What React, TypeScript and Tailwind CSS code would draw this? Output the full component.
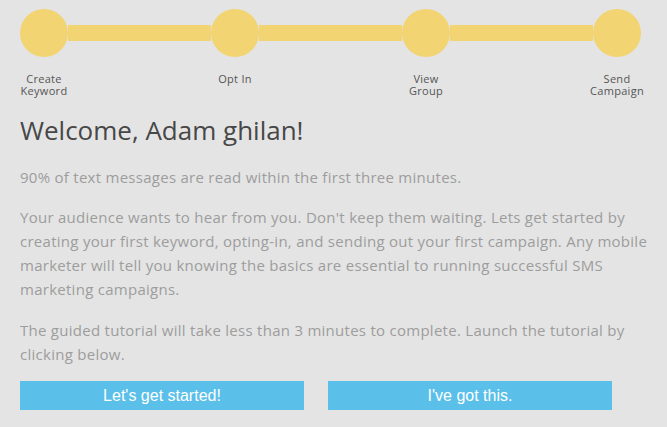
import React from "react";

const steps = [
  ["Create", "Keyword"],
  ["Opt In"],
  ["View", "Group"],
  ["Send", "Campaign"],
];

function Step({ lines }: { lines: string[] }) {
  return (
    <div className="flex w-[48px] shrink-0 flex-col items-center">
      <div className="h-[48px] w-[48px] rounded-full bg-[#f2d473]" />
      <div className="mt-[16px] flex flex-col items-center whitespace-nowrap text-center text-[11px] leading-[12px] tracking-[0.3px] text-[#555555]">
        {lines.map((l) => (
          <span key={l}>{l}</span>
        ))}
      </div>
    </div>
  );
}

export default function App() {
  return (
    <div
      className="h-[427px] w-[667px] overflow-hidden bg-[#e4e4e4] pl-[20px] pr-[8px] pt-[9px]"
      style={{ fontFamily: "'Open Sans', 'Liberation Sans', sans-serif" }}
    >
      <div className="flex w-[621px] items-start">
        {steps.map((s, i) => (
          <React.Fragment key={i}>
            {i > 0 && <div className="mt-[16px] h-[16px] flex-1 bg-[#f2d473]" />}
            <Step lines={s} />
          </React.Fragment>
        ))}
      </div>

      <h1 className="mt-[17px] text-[26px] font-normal leading-[32px] text-[#474747]">
        Welcome, Adam ghilan!
      </h1>

      <p className="mt-[19px] whitespace-nowrap text-[15px] leading-[24px] tracking-[0.27px] text-[#9d9d9d]">
        90% of text messages are read within the first three minutes.
      </p>

      <p className="mt-[16px] whitespace-nowrap text-[15px] leading-[24px] tracking-[0.27px] text-[#9d9d9d]">
        Your audience wants to hear from you. Don't keep them waiting. Lets get started by
        <br />
        creating your first keyword, opting-in, and sending out your first campaign. Any mobile
        <br />
        marketer will tell you knowing the basics are essential to running successful SMS
        <br />
        marketing campaigns.
      </p>

      <p className="mt-[17px] whitespace-nowrap text-[15px] leading-[24px] tracking-[0.27px] text-[#9d9d9d]">
        The guided tutorial will take less than 3 minutes to complete. Launch the tutorial by
        <br />
        clicking below.
      </p>

      <div className="mt-[15px] flex gap-[24px]">
        <button
          className="h-[29px] w-[284px] bg-[#5abfe9] text-[16px] text-white"
          style={{ fontFamily: "'Liberation Sans', Arial, sans-serif" }}
        >
          Let's get started!
        </button>
        <button
          className="h-[29px] w-[284px] bg-[#5abfe9] text-[16px] text-white"
          style={{ fontFamily: "'Liberation Sans', Arial, sans-serif" }}
        >
          I've got this.
        </button>
      </div>
    </div>
  );
}
